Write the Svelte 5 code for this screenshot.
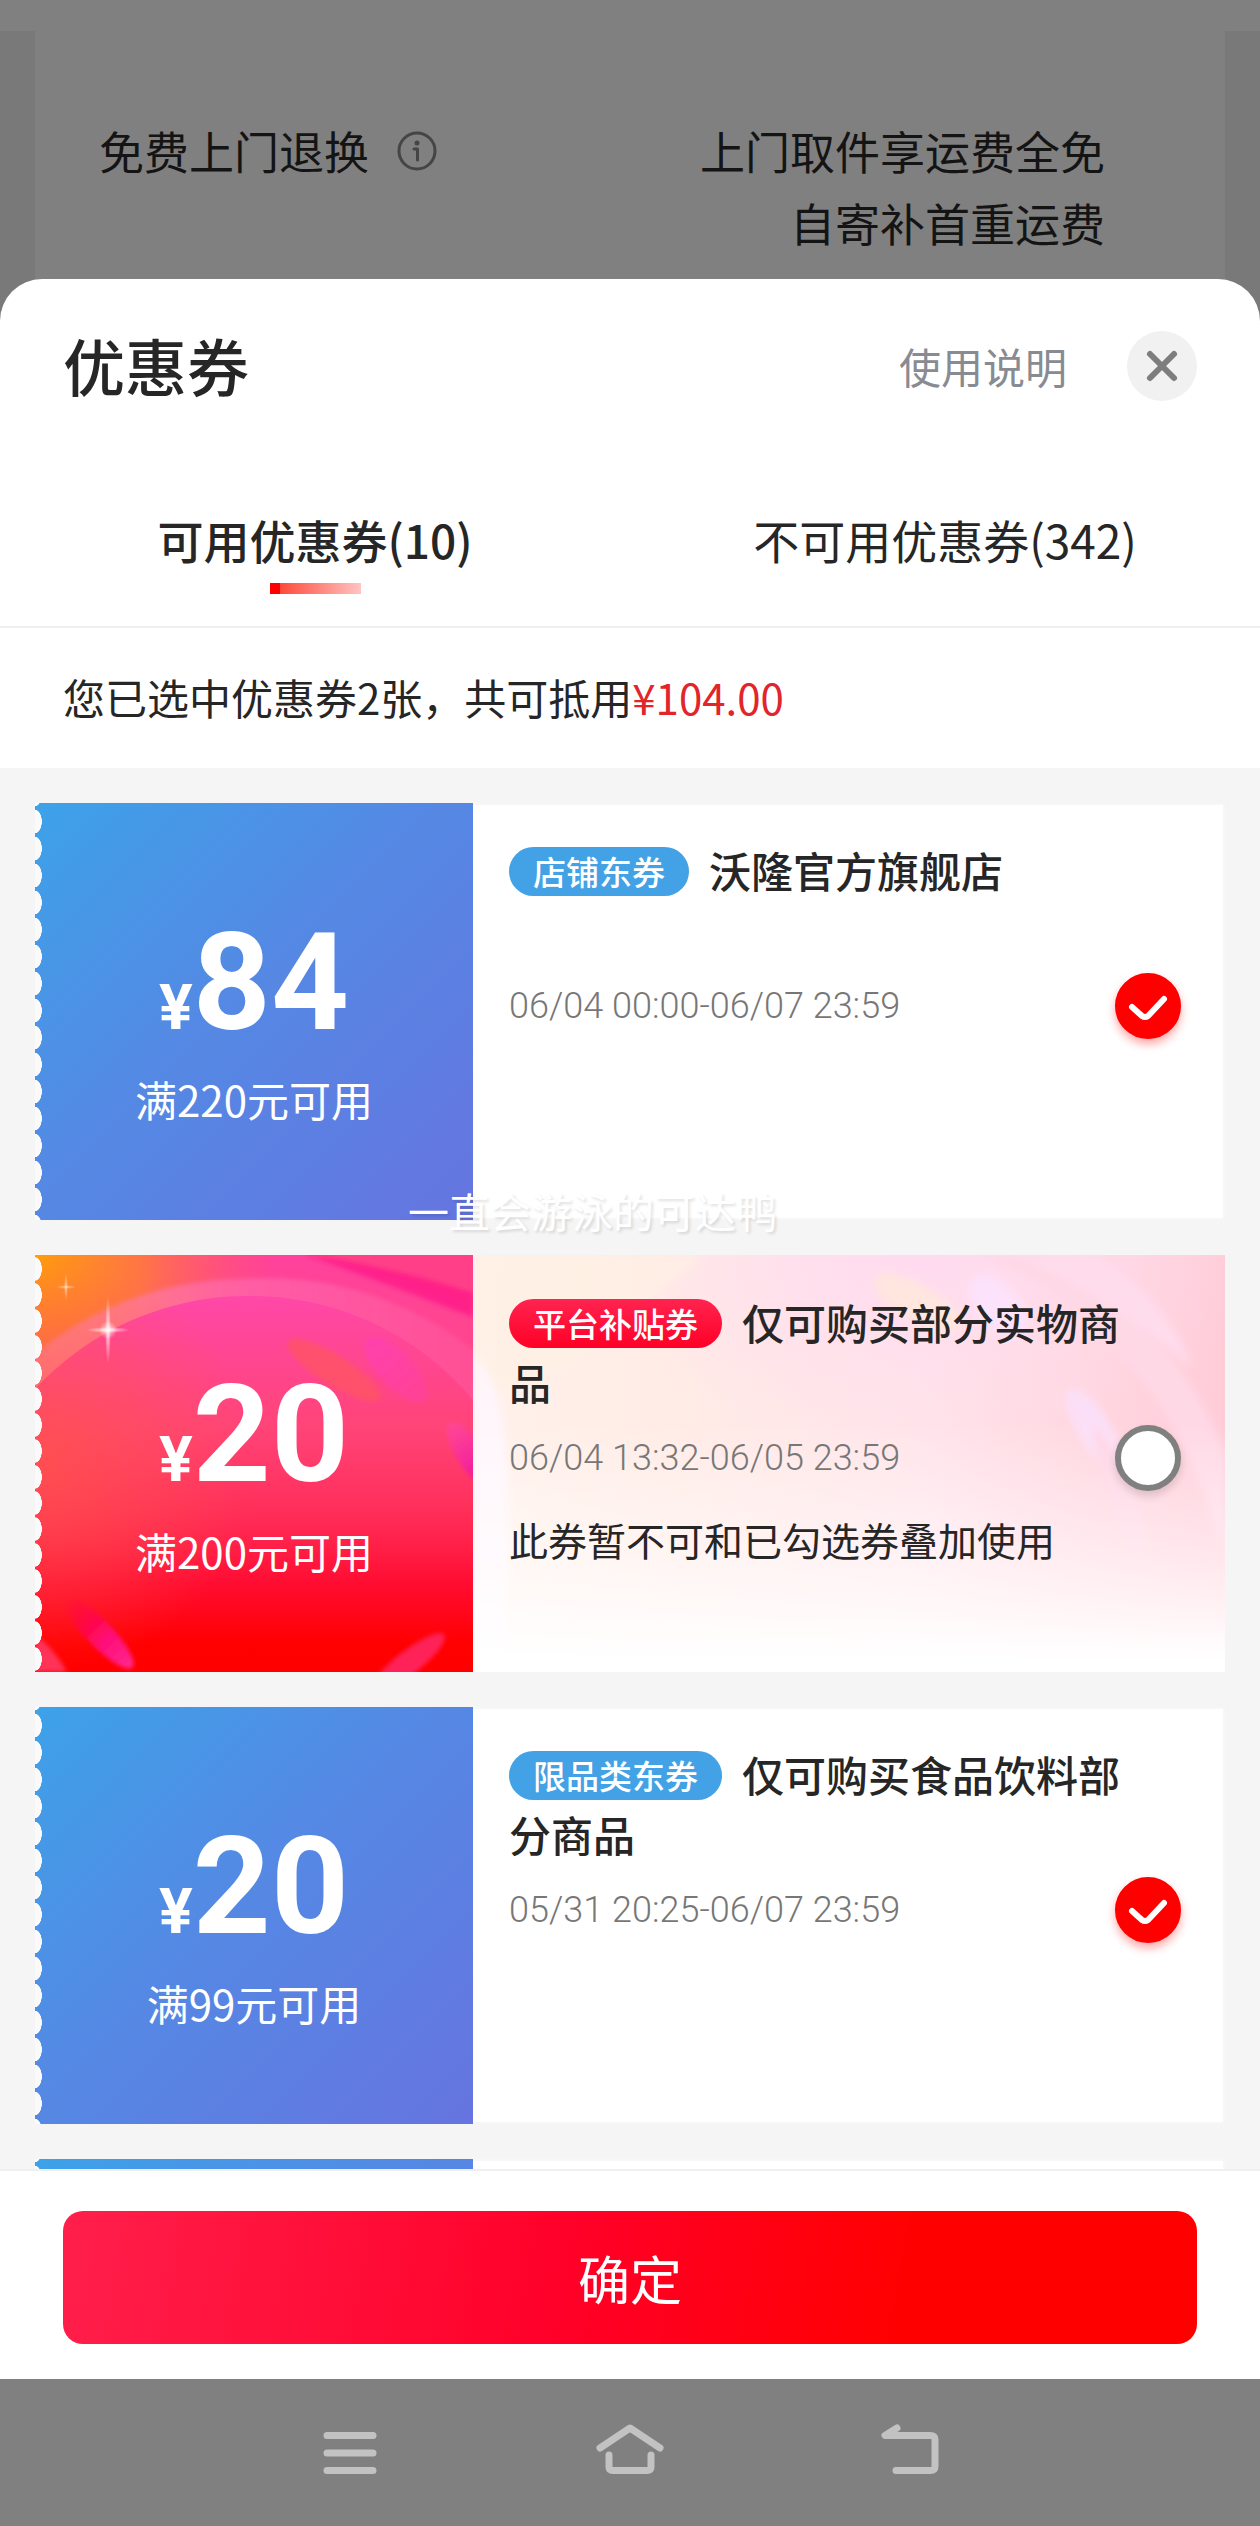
<script lang="ts">
  type Coupon = {
    id: number;
    theme: 'blue' | 'red';
    amount: number;
    limit: number;
    tag: string;
    title: string;
    period: string;
    note?: string;
    checked: boolean;
  };

  let coupons: Coupon[] = $state([
    {
      id: 1,
      theme: 'blue',
      amount: 84,
      limit: 220,
      tag: '店铺东券',
      title: '沃隆官方旗舰店',
      period: '06/04 00:00-06/07 23:59',
      checked: true,
    },
    {
      id: 2,
      theme: 'red',
      amount: 20,
      limit: 200,
      tag: '平台补贴券',
      title: '仅可购买部分实物商品',
      period: '06/04 13:32-06/05 23:59',
      note: '此券暂不可和已勾选券叠加使用',
      checked: false,
    },
    {
      id: 3,
      theme: 'blue',
      amount: 20,
      limit: 99,
      tag: '限品类东券',
      title: '仅可购买食品饮料部分商品',
      period: '05/31 20:25-06/07 23:59',
      checked: true,
    },
  ]);

  const tabs = [
    { key: 'usable', label: '可用优惠券', count: 10 },
    { key: 'unusable', label: '不可用优惠券', count: 342 },
  ];

  let activeTab = $state('usable');

  const picked = $derived(coupons.filter((c) => c.checked));
  const total = $derived(picked.reduce((sum, c) => sum + c.amount, 0).toFixed(2));
</script>

<div class="screen">
  <div class="order">
    <div class="order-card">
      <div class="service">
        <span class="service-name">免费上门退换</span>
        <svg class="info-icon" viewBox="0 0 40 40" aria-hidden="true">
          <circle cx="20" cy="20" r="18" fill="none" stroke="#454545" stroke-width="3" />
          <circle cx="20" cy="12" r="2.5" fill="#454545" />
          <path d="M17 18h3.5v11" fill="none" stroke="#454545" stroke-width="3" stroke-linecap="round" stroke-linejoin="round" />
        </svg>
        <p class="service-desc">上门取件享运费全免<br />自寄补首重运费</p>
      </div>
    </div>
  </div>

  <section class="sheet">
    <header class="header">
      <h1>优惠券</h1>
      <button class="help">使用说明</button>
      <button class="close" aria-label="关闭">
        <svg viewBox="0 0 70 70" aria-hidden="true">
          <path d="M23 23l24 24M47 23L23 47" stroke="#7d7d7d" stroke-width="6" stroke-linecap="round" />
        </svg>
      </button>
    </header>

    <div class="tabs" role="tablist">
      {#each tabs as tab}
        <button
          class="tab"
          class:active={activeTab === tab.key}
          role="tab"
          aria-selected={activeTab === tab.key}
          onclick={() => (activeTab = tab.key)}
        >
          {tab.label}({tab.count})
        </button>
      {/each}
    </div>

    <p class="summary">您已选中优惠券{picked.length}张，共可抵用<span class="total">¥{total}</span></p>

    <div class="list">
      {#each coupons as coupon (coupon.id)}
        <article class="coupon {coupon.theme}">
          <div class="face">
            {#if coupon.theme === 'red'}
              <svg class="art" viewBox="0 0 438 417" preserveAspectRatio="none" aria-hidden="true">
                <defs>
                  <linearGradient id="base" x1="0" y1="0" x2="0" y2="1">
                    <stop offset="0" stop-color="#ff429c" />
                    <stop offset="0.35" stop-color="#ff4784" />
                    <stop offset="0.6" stop-color="#ff3058" />
                    <stop offset="0.78" stop-color="#ff0632" />
                    <stop offset="0.93" stop-color="#ff0000" />
                  </linearGradient>
                  <radialGradient id="corner" cx="0" cy="0" r="0.55">
                    <stop offset="0" stop-color="#ff9d0c" />
                    <stop offset="0.45" stop-color="#ff7a3c" stop-opacity="0.9" />
                    <stop offset="1" stop-color="#ff5a60" stop-opacity="0" />
                  </radialGradient>
                  <linearGradient id="disc" x1="0" y1="0" x2="0" y2="1">
                    <stop offset="0" stop-color="#ff48a8" />
                    <stop offset="0.35" stop-color="#ff4478" />
                    <stop offset="0.62" stop-color="#ff2a55" stop-opacity="0.6" />
                    <stop offset="1" stop-color="#ff0000" stop-opacity="0" />
                  </linearGradient>
                  <linearGradient id="ring" x1="0" y1="0" x2="1" y2="0">
                    <stop offset="0" stop-color="#ff88a0" stop-opacity="0.75" />
                    <stop offset="0.45" stop-color="#ff70b4" stop-opacity="0.6" />
                    <stop offset="1" stop-color="#ff5aa0" stop-opacity="0.5" />
                  </linearGradient>
                  <radialGradient id="coral" cx="0" cy="0.5" r="0.5">
                    <stop offset="0" stop-color="#ff5548" stop-opacity="0.75" />
                    <stop offset="1" stop-color="#ff5548" stop-opacity="0" />
                  </radialGradient>
                  <linearGradient id="petal" x1="0" y1="0" x2="1" y2="0">
                    <stop offset="0" stop-color="#ff0050" stop-opacity="0" />
                    <stop offset="0.6" stop-color="#ff0c78" />
                    <stop offset="1" stop-color="#ff2a90" />
                  </linearGradient>
                  <linearGradient id="magenta" x1="0" y1="0" x2="1" y2="0">
                    <stop offset="0" stop-color="#ff40b0" stop-opacity="0.9" />
                    <stop offset="1" stop-color="#ff3fa4" stop-opacity="0.5" />
                  </linearGradient>
                  <linearGradient id="edge" x1="0" y1="0" x2="1" y2="0">
                    <stop offset="0" stop-color="#ff4aa0" stop-opacity="0.7" />
                    <stop offset="1" stop-color="#ec0ca4" />
                  </linearGradient>
                  <radialGradient id="spark">
                    <stop offset="0" stop-color="#fff" stop-opacity="0.8" />
                    <stop offset="1" stop-color="#fff" stop-opacity="0" />
                  </radialGradient>
                  <filter id="soft"><feGaussianBlur stdDeviation="2" /></filter>
                </defs>
                <rect width="438" height="417" fill="url(#base)" />
                <path d="M270 0C340 14 390 28 438 54V0z" fill="#ff4088" />
                <path d="M270 0C330 8 390 22 438 38V62C390 44 330 20 270 0z" fill="#ff1688" opacity="0.75" filter="url(#soft)" />
                <rect width="438" height="417" fill="url(#corner)" />
                <path d="M-6 104A330 330 0 0 1 209 24A330 330 0 0 1 444 100V160H-6z" fill="url(#ring)" filter="url(#soft)" />
                <path d="M0 134A289 289 0 0 1 209 41A289 289 0 0 1 438 145V417H0z" fill="url(#disc)" />
                <rect width="438" height="417" fill="url(#coral)" />
                <ellipse cx="299" cy="115" rx="54" ry="15" transform="rotate(32 299 115)" fill="#ff5562" opacity="0.75" filter="url(#soft)" />
                <ellipse cx="361" cy="115" rx="42" ry="17" transform="rotate(46 361 115)" fill="url(#magenta)" filter="url(#soft)" />
                <ellipse cx="434" cy="198" rx="36" ry="13" transform="rotate(58 434 198)" fill="url(#edge)" filter="url(#soft)" />
                <ellipse cx="64" cy="378" rx="48" ry="13" transform="rotate(46 64 378)" fill="url(#petal)" filter="url(#soft)" />
                <ellipse cx="373" cy="408" rx="46" ry="12" transform="rotate(-38 373 408)" fill="#ff2258" filter="url(#soft)" />
                <path d="M0 380C12 388 24 402 32 417H0z" fill="#ff3358" filter="url(#soft)" />
                <ellipse cx="73" cy="75" rx="3" ry="34" fill="url(#spark)" />
                <ellipse cx="73" cy="75" rx="22" ry="3" fill="url(#spark)" />
                <circle cx="73" cy="75" r="9" fill="url(#spark)" />
                <ellipse cx="31" cy="32" rx="2" ry="14" fill="url(#spark)" opacity="0.7" />
                <ellipse cx="31" cy="32" rx="10" ry="2" fill="url(#spark)" opacity="0.7" />
              </svg>
            {/if}
            <p class="amount"><span class="yen">¥</span>{coupon.amount}</p>
            <p class="limit">满{coupon.limit}元可用</p>
          </div>

          <div class="info">
            {#if coupon.theme === 'red'}
              <svg class="art" viewBox="0 0 752 417" preserveAspectRatio="none" aria-hidden="true">
                <defs>
                  <linearGradient id="wash" x1="0" y1="0" x2="1" y2="0">
                    <stop offset="0" stop-color="#fff1ea" />
                    <stop offset="0.25" stop-color="#ffece6" />
                    <stop offset="0.6" stop-color="#ffe4ea" />
                    <stop offset="1" stop-color="#ffccd8" />
                  </linearGradient>
                  <linearGradient id="fade" x1="0" y1="0" x2="0" y2="1">
                    <stop offset="0.4" stop-color="#fff" stop-opacity="0" />
                    <stop offset="0.8" stop-color="#fff" stop-opacity="0.65" />
                    <stop offset="0.97" stop-color="#fff" />
                  </linearGradient>
                  <radialGradient id="top" cx="0.6" cy="0" r="0.45">
                    <stop offset="0" stop-color="#ffdaf0" />
                    <stop offset="1" stop-color="#ffdcee" stop-opacity="0" />
                  </radialGradient>
                  <filter id="haze"><feGaussianBlur stdDeviation="4" /></filter>
                </defs>
                <rect width="752" height="417" fill="url(#wash)" />
                <rect width="752" height="417" fill="url(#top)" />
                <path d="M0 0H230L150 70C110 110 60 130 0 140z" fill="#fff1e4" opacity="0.7" filter="url(#haze)" />
                <path d="M500 0C600 30 700 120 752 300V200C720 110 650 40 570 0z" fill="#ffd8e6" filter="url(#haze)" />
                <path d="M540 0C620 30 680 80 720 114C700 60 660 20 620 0z" fill="#ffdcec" filter="url(#haze)" />
                <ellipse cx="445" cy="48" rx="50" ry="18" transform="rotate(30 445 48)" fill="#ffe6de" filter="url(#haze)" />
                <ellipse cx="525" cy="52" rx="38" ry="22" transform="rotate(50 525 52)" fill="#fce2fa" filter="url(#haze)" />
                <ellipse cx="620" cy="172" rx="44" ry="16" transform="rotate(58 620 172)" fill="#fbdff8" filter="url(#haze)" />
                <path d="M620 170C650 200 680 260 672 310C640 280 625 220 620 170z" fill="#ffd4e4" filter="url(#haze)" />
                <path d="M0 100C36 130 44 220 30 417H0z" fill="#fff6fb" filter="url(#haze)" />
                <rect width="752" height="417" fill="url(#fade)" />
              </svg>
            {/if}
            <h2 class="title"><span class="tag">{coupon.tag}</span>{coupon.title}</h2>
            <div class="row">
              <time class="period">{coupon.period}</time>
              <label class="check">
                <input type="checkbox" bind:checked={coupon.checked} aria-label={coupon.title} />
                {#if coupon.checked}
                  <svg viewBox="0 0 66 66" aria-hidden="true">
                    <path d="M17 34l10 9q3 2 6 0L49 26" fill="none" stroke="#fff" stroke-width="6" stroke-linecap="round" stroke-linejoin="round" />
                  </svg>
                {/if}
              </label>
            </div>
            {#if coupon.note}
              <p class="note">{coupon.note}</p>
            {/if}
          </div>
        </article>
      {/each}

      <!-- next coupon peeking out above the footer -->
      <article class="coupon blue" aria-hidden="true">
        <div class="face"></div>
        <div class="info"></div>
      </article>

      <span class="watermark">一直会游泳的可达鸭</span>
    </div>

    <footer class="footer">
      <button class="confirm">确定</button>
    </footer>
  </section>

  <nav class="navbar">
    <button aria-label="菜单">
      <svg viewBox="0 0 80 60" aria-hidden="true">
        <path d="M17 12.5h46M17 30h46M17 47.5h46" />
      </svg>
    </button>
    <button aria-label="主页">
      <svg viewBox="0 0 80 60" aria-hidden="true">
        <path d="M10 25L40 5l30 20" />
        <path d="M19 32v12q0 3.500 4 3.500h34q4 0 4-3.500V32" />
      </svg>
    </button>
    <button aria-label="返回">
      <svg viewBox="0 0 80 60" aria-hidden="true">
        <path d="M27 5L15 12.500H60q5 0 5 4v27q0 4-5 4H26" />
      </svg>
    </button>
  </nav>
</div>

<style>
:global(body) {
  background: #808080;
}

.screen {
  display: flex;
  flex-direction: column;
  height: 100vh;
  font-family: "Noto Sans CJK SC", sans-serif;
  color: #262626;
}

button {
  border: none;
  background: none;
  color: inherit;
  font: inherit;
  padding: 0;
  cursor: pointer;
}

h1, h2, p {
  margin: 0;
  font-weight: 400;
}

.order {
  padding: 31px 35px 0;
  background: linear-gradient(#808080 31px, #797979 31px);
}

.order-card {
  background: #808080;
  padding: 84px 120px 62px 64px;
}

.service {
  display: flex;
  align-items: flex-start;
  font-size: 45px;
  line-height: 72px;
  color: #141414;
}

.info-icon {
  width: 40px;
  height: 72px;
  margin-left: 28px;
}

.service-desc {
  margin-left: auto;
  text-align: right;
}

.sheet {
  position: relative;
  flex: 1;
  min-height: 0;
  display: flex;
  flex-direction: column;
  margin-top: -42px;
  background: #fff;
  border-radius: 42px 42px 0 0;
}

.header {
  display: flex;
  align-items: center;
  padding: 43px 63px 49px;
}

h1 {
  flex: 1;
  font-size: 62px;
  line-height: 87px;
  font-weight: 500;
}

.help {
  font-size: 42px;
  line-height: 60px;
  color: #888b92;
}

.close {
  width: 70px;
  height: 70px;
  margin-left: 60px;
  border-radius: 50%;
  background: #f1f1f1;
}

.close svg { display: block; }

.tabs {
  display: flex;
  border-bottom: 2px solid #f0f0f0;
}

.tab {
  flex: 1;
  padding: 51px 0 32px;
  font-size: 46px;
  line-height: 60px;
}

.tab::after {
  content: '';
  display: block;
  width: 91px;
  height: 11px;
  margin: 14px auto 0;
}

.tab.active { font-weight: 500; }

.tab.active::after {
  background: linear-gradient(90deg, #f00 10px, #ff4a3a 10px, #ffc4c4);
}

.summary {
  padding: 39px 63px 41px;
  font-size: 42px;
  line-height: 60px;
}

.total { color: #e1252b; }

.list {
  position: relative;
  flex: 1;
  min-height: 0;
  overflow: hidden;
  display: flex;
  flex-direction: column;
  gap: 35px;
  padding: 35px 35px 0;
  background: #f5f5f5;
}

.coupon {
  flex-shrink: 0;
  display: flex;
  min-height: 417px;
}

.face {
  position: relative;
  width: 438px;
  flex-shrink: 0;
  display: flex;
  flex-direction: column;
  align-items: center;
  gap: 18px;
  padding-top: 112px;
  box-sizing: border-box;
  color: #fff;
}

/* torn ticket edge */
.face::after {
  content: '';
  position: absolute;
  inset: 0 auto 0 0;
  width: 7px;
  background: radial-gradient(ellipse 7px 12px at 0 50%, #fafafa 94%, transparent) 0 5px / 7px 27px;
}

.red .face::after { background-position: 0 1px; background-size: 7px 26px; }

.blue .face { background: linear-gradient(135deg, #3da2e9, #5489e4 45%, #6674e0); }

.art {
  position: absolute;
  inset: 0;
  width: 100%;
  height: 100%;
}

.amount {
  position: relative;
  font-family: Roboto, sans-serif;
  font-size: 136px;
  line-height: 136px;
  font-weight: 700;
}

.yen {
  font-size: 63px;
  line-height: 63px;
}

.limit {
  position: relative;
  font-size: 42px;
  line-height: 60px;
}

.info {
  position: relative;
  flex: 1;
  min-width: 0;
  padding: 37px 44px 39px 36px;
  background: #fff;
}

.blue .info {
  box-shadow: inset -2px 0 #f7f7f7, inset 0 2px #f7f7f7, inset 0 -2px #f7f7f7;
}

.title {
  position: relative;
  min-height: 122px;
  margin-right: 50px;
  font-size: 42px;
  line-height: 60px;
  font-weight: 500;
}

.tag {
  display: inline-block;
  margin-right: 20px;
  padding: 0 24px;
  border-radius: 25px;
  background: #43a1e5;
  color: #fff;
  font-size: 33px;
  line-height: 49px;
  vertical-align: 3px;
}

.red .tag { background: linear-gradient(#ff2450, #ff0026); }

.row {
  position: relative;
  display: flex;
  align-items: center;
  justify-content: space-between;
  height: 88px;
}

.period {
  font-family: Roboto, sans-serif;
  font-size: 36px;
  font-weight: 300;
  color: #777;
}

.check {
  display: grid;
  cursor: pointer;
}

.check > * { grid-area: 1 / 1; }

.check svg {
  position: relative;
  width: 66px;
  height: 66px;
}

.check input {
  appearance: none;
  width: 66px;
  height: 66px;
  margin: 0;
  border: 6px solid #808080;
  border-radius: 50%;
  background: #fff;
  box-shadow: 0 5px 8px rgba(0, 0, 0, 0.14);
}

.check input:checked {
  border-color: #f00;
  background: #f00;
  box-shadow: 0 5px 10px rgba(255, 0, 0, 0.35);
}

.note {
  position: relative;
  padding-top: 7px;
  font-size: 39px;
  line-height: 60px;
}

/* floats over the gap between the first two coupons */
.watermark {
  position: absolute;
  top: 412px;
  left: 408px;
  font-size: 41px;
  line-height: 60px;
  color: #fff;
  text-shadow: 2px 2px 3px rgba(0, 0, 0, 0.12);
}

.footer {
  padding: 40px 63px 35px;
  border-top: 2px solid #efefef;
}

.confirm {
  display: block;
  width: 100%;
  height: 133px;
  border-radius: 20px;
  background: linear-gradient(100deg, #ff1f4b, #ff0028 45%, #f00 75%);
  color: #fff;
  font-size: 52px;
}

.navbar {
  display: flex;
  justify-content: center;
  align-items: center;
  gap: 200px;
  height: 147px;
  background: #808080;
}

.navbar svg {
  display: block;
  width: 80px;
  height: 60px;
  fill: none;
  stroke: #c2c2c2;
  stroke-width: 7;
  stroke-linecap: round;
  stroke-linejoin: round;
}
</style>
